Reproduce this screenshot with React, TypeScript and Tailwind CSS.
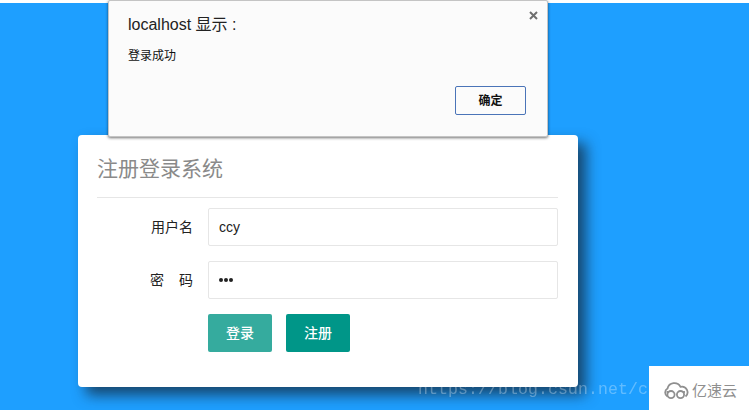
const cjk = "font-['Liberation_Sans','Noto_Sans_CJK_SC',sans-serif]";

function Logo() {
  return (
    <svg width="26" height="18" viewBox="0 0 26 18" fill="none" stroke="#8f8f8f" strokeWidth="1.8">
      <path d="M4.5 14.5 A4.6 4.6 0 0 1 4.5 6.5 A7 7 0 0 1 17.5 4.8 A5.6 5.6 0 0 1 22.5 14.5" />
      <circle cx="8" cy="12.6" r="3.6" />
      <circle cx="17.5" cy="12.6" r="3.6" />
      <path d="M4.5 11 V9 M21 11 V9" />
    </svg>
  );
}

export default function App() {
  return (
    <div className={`relative h-[410px] w-[749px] overflow-hidden bg-[#1e9fff] ${cjk}`}>
      <div className="h-[3px] bg-white" />

      <div className="ml-[78px] mt-[132px] flex h-[252px] w-[500px] flex-col rounded-[4px] bg-white px-5 shadow-[8px_8px_14px_rgba(20,40,60,0.75)]">
        <div className="-ml-px flex h-[63px] items-end border-b border-[#e6e6e6] pb-[13px] pl-0 text-[21px] leading-[30px] text-[#8a8a8a]">
          注册登录系统
        </div>
        <div className="mt-[10px] flex h-[38px] items-center">
          <span className="w-[95px] text-right text-[14px] text-[#222]">用户名</span>
          <div className="ml-[15px] flex h-[38px] w-[350px] items-center rounded-[2px] border border-[#e6e6e6] pl-[10px] text-[14px] text-[#222]">
            ccy
          </div>
        </div>
        <div className="mt-[15px] flex h-[38px] items-center">
          <span className="flex w-[95px] justify-end gap-[15px] text-[14px] text-[#222]">
            <span>密</span>
            <span>码</span>
          </span>
          <div className="ml-[15px] flex h-[38px] w-[350px] items-center gap-[1.5px] rounded-[2px] border border-[#e6e6e6] pl-[10px]">
            <span className="size-[3.5px] rounded-full bg-[#222]" />
            <span className="size-[3.5px] rounded-full bg-[#222]" />
            <span className="size-[3.5px] rounded-full bg-[#222]" />
          </div>
        </div>
        <div className="ml-[110px] mt-[15px] flex gap-[14px]">
          <button className="h-[38px] w-[64px] rounded-[2px] bg-[#35ab9e] text-[14px] font-medium text-white">登录</button>
          <button className="h-[38px] w-[64px] rounded-[2px] bg-[#009688] text-[14px] font-medium text-white">注册</button>
        </div>
      </div>

      <div className="absolute left-[108px] top-0 h-[137px] w-[440px] rounded-[2px] border border-[#c4c4c4] bg-[#fbfbfb] shadow-[0_1px_3px_rgba(0,0,0,0.55)]">
        <div className="absolute left-[19px] top-[14px] text-[16px] leading-[20px] whitespace-pre text-[#222]">localhost 显示 :</div>
        <div className="absolute left-[19px] top-[47px] text-[12px] leading-[16px] text-[#111]">登录成功</div>
        <svg className="absolute right-[9px] top-[10px]" width="9" height="9" viewBox="0 0 9 9" stroke="#6e6e6e" strokeWidth="2">
          <path d="M1 1 L8 8 M8 1 L1 8" />
        </svg>
        <button className="absolute left-[346px] top-[85px] h-[29px] w-[71px] rounded-[2px] border border-[#4a74b8] bg-[#fbfbfb] text-[12px] font-bold text-[#111]">
          确定
        </button>
      </div>

      <div className="absolute left-[418px] top-[378px] font-['Liberation_Mono',monospace] text-[16.5px] leading-[24px] tracking-[0.1px] whitespace-nowrap text-white/30 blur-[0.4px]">
        https://blog.csdn.net/c
      </div>

      <div className="absolute left-[649px] top-[366px] flex h-[44px] w-[100px] items-center justify-start gap-[3px] bg-white pl-[14px] pt-[5px]">
        <Logo />
        <span className="text-[15px] leading-[18px] text-[#8f8f8f]">亿速云</span>
      </div>
    </div>
  );
}
